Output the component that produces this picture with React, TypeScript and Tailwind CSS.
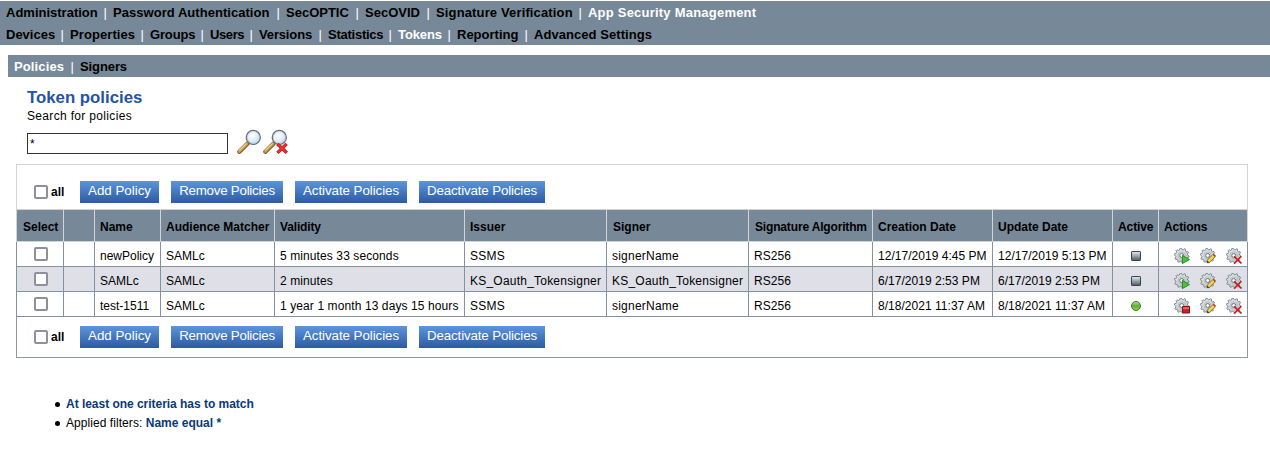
import React from 'react';

type NavItem = { label: string; width: string; tracking?: string; active?: boolean };

const MAIN_NAV: NavItem[] = [
  { label: 'Administration', width: 'w-[107px]' },
  { label: 'Password Authentication', width: 'w-[173px]', tracking: 'tracking-[0.04px]' },
  { label: 'SecOPTIC', width: 'w-[79px]' },
  { label: 'SecOVID', width: 'w-[71px]' },
  { label: 'Signature Verification', width: 'w-[152px]', tracking: 'tracking-[0.14px]' },
  { label: 'App Security Management', width: 'w-[180px]', tracking: 'tracking-[0.22px]', active: true },
];

const SUB_NAV: NavItem[] = [
  { label: 'Devices', width: 'w-[64px]' },
  { label: 'Properties', width: 'w-[80px]', tracking: 'tracking-[0.08px]' },
  { label: 'Groups', width: 'w-[60px]', tracking: 'tracking-[-0.15px]' },
  { label: 'Users', width: 'w-[49px]', tracking: 'tracking-[-0.4px]' },
  { label: 'Versions', width: 'w-[69px]', tracking: 'tracking-[-0.15px]' },
  { label: 'Statistics', width: 'w-[70px]', tracking: 'tracking-[-0.25px]' },
  { label: 'Tokens', width: 'w-[59px]', tracking: 'tracking-[-0.1px]', active: true },
  { label: 'Reporting', width: 'w-[77px]' },
  { label: 'Advanced Settings', width: 'w-[140px]', tracking: 'tracking-[0.06px]' },
];

const TAB_NAV: NavItem[] = [
  { label: 'Policies', width: 'w-[66px]', tracking: 'tracking-[0.12px]', active: true },
  { label: 'Signers', width: 'w-[60px]', tracking: 'tracking-[-0.1px]' },
];

function NavRow({ items }: { items: NavItem[] }) {
  return (
    <nav className="flex h-[22px] items-start pt-px text-[13px] leading-[22px] font-bold whitespace-nowrap">
      {items.map((item, i) => (
        <span key={item.label} className={`flex justify-between ${item.width}`}>
          <a className={`${item.active ? 'text-white' : 'text-black'} ${item.tracking ?? ''}`}>{item.label}</a>
          {i < items.length - 1 && <span className="pr-[6px] font-normal text-white">|</span>}
        </span>
      ))}
    </nav>
  );
}

function Magnifier({ clear }: { clear?: boolean }) {
  return (
    <svg width="26" height="26" viewBox="0 0 26 26">
      <defs>
        <radialGradient id="lens" cx="0.4" cy="0.35" r="0.7">
          <stop offset="0" stopColor="#ffffff" />
          <stop offset="0.6" stopColor="#dcecf8" />
          <stop offset="1" stopColor="#b4d5ef" />
        </radialGradient>
      </defs>
      <path d="M10.6 14.4 2.4 22.7" stroke="#6b4a20" strokeWidth="4.2" strokeLinecap="round" />
      <path d="M10.1 14.6 2.4 22.4" stroke="#c99550" strokeWidth="3" strokeLinecap="round" />
      <path d="M9.6 14.3 2.2 21.6" stroke="#f0d5a0" strokeWidth="1.1" />
      <circle cx="16.3" cy="8.4" r="7" fill="url(#lens)" stroke="#66707a" strokeWidth="1.4" />
      <circle cx="16.3" cy="8.4" r="6" fill="none" stroke="#c3ccd3" strokeWidth="0.8" />
      {clear && (
        <g strokeLinecap="butt">
          <path d="m14.4 14.9 9.4 8.9M23.6 14.9l-9.2 9" stroke="#b01818" strokeWidth="3.4" />
          <path d="m14.8 15.3 8.6 8.1M23.2 15.3l-8.4 8.2" stroke="#e63232" strokeWidth="2.1" />
        </g>
      )}
    </svg>
  );
}

type Badge = 'play' | 'stop' | 'edit' | 'delete';

const TEETH = 10;
const GEAR_POINTS = Array.from({ length: TEETH * 4 }, (_, i) => {
  const radius = i % 4 < 2 ? 7.4 : 5.9;
  const angle = ((i + 0.5) / (TEETH * 4)) * Math.PI * 2;
  return `${(7.7 + radius * Math.cos(angle)).toFixed(2)},${(7.5 + radius * Math.sin(angle)).toFixed(2)}`;
}).join(' ');

function GearIcon({ badge }: { badge: Badge }) {
  return (
    <svg width="16" height="16" viewBox="0 0 16 16">
      <defs>
        <linearGradient id="gear" x1="0" y1="0" x2="1" y2="1">
          <stop offset="0" stopColor="#e9eef1" />
          <stop offset="1" stopColor="#b3bcc2" />
        </linearGradient>
      </defs>
      <polygon points={GEAR_POINTS} fill="url(#gear)" stroke="#6d767c" strokeWidth="0.8" strokeLinejoin="round" />
      <circle cx="7.7" cy="7.5" r="3.7" fill="none" stroke="#b9c2c8" strokeWidth="1" />
      <circle cx="7.7" cy="7.5" r="2" fill="#fafbfc" stroke="#6d767c" strokeWidth="1" />
      {badge === 'play' && <path d="M8.4 7.4v8.2l7.1-4.1z" fill="#4fc23b" stroke="#23851b" strokeWidth="0.9" />}
      {badge === 'stop' && (
        <>
          <path d="M8.5 8.5h7v6.5h-7z" fill="#c91f26" stroke="#8e0c13" />
          <path d="M9 9.2h6v2H9z" fill="#e8696c" />
        </>
      )}
      {badge === 'edit' && (
        <>
          <path d="m8 13.7 6.2-6.2" stroke="#8b6a1a" strokeWidth="3.8" />
          <path d="m6.6 15.3.4-2.8 2.4 2.3z" fill="#4a3a20" />
          <path d="m8.3 13.4 5.5-5.5" stroke="#f8d750" strokeWidth="2.4" />
          <path d="m13.9 7.7 1-1" stroke="#d0312b" strokeWidth="3" />
        </>
      )}
      {badge === 'delete' && <path d="m8 8.3 7.5 7.2M15.3 8.3l-7.2 7.4" stroke="#d01b1b" strokeWidth="1.6" />}
    </svg>
  );
}

function StatusIcon({ active }: { active: boolean }) {
  return (
    <svg width="10" height="10" viewBox="0 0 10 10" className="mx-auto block">
      <defs>
        <linearGradient id="idle" x1="0" y1="0" x2="0" y2="1">
          <stop offset="0" stopColor="#e4edf3" />
          <stop offset="1" stopColor="#4d5a63" />
        </linearGradient>
        <linearGradient id="running" x1="0" y1="0" x2="0" y2="1">
          <stop offset="0" stopColor="#b5dc92" />
          <stop offset="0.5" stopColor="#62b030" />
          <stop offset="1" stopColor="#8ad850" />
        </linearGradient>
      </defs>
      {active ? (
        <circle cx="5" cy="5" r="4.5" fill="url(#running)" stroke="#3c6b20" strokeWidth="0.9" />
      ) : (
        <rect x="0.5" y="0.5" width="9" height="9" rx="0.6" fill="url(#idle)" stroke="#39434a" />
      )}
    </svg>
  );
}

function Checkbox() {
  return (
    <input
      type="checkbox"
      className="block size-[14px] shrink-0 appearance-none rounded-[2px] border-2 border-[#8f8f9d] bg-white"
    />
  );
}

const BUTTONS = [
  { label: 'Add Policy', style: 'w-[79px]' },
  { label: 'Remove Policies', style: 'w-[112px] tracking-[-0.24px]' },
  { label: 'Activate Policies', style: 'w-[112px] tracking-[-0.06px]' },
  { label: 'Deactivate Policies', style: 'w-[126px] tracking-[-0.14px]' },
];

function Toolbar() {
  return (
    <div className="flex items-start pl-[17px]">
      <label className="flex w-[46px] items-center gap-[3px] pt-1 leading-[14px] font-bold">
        <Checkbox />
        all
      </label>
      <div className="flex gap-3">
        {BUTTONS.map((b) => (
          <button
            key={b.label}
            className={`h-[22px] bg-linear-to-b from-[#5c96dc] to-[#2d5aa3] pb-[3px] text-[13.33px] leading-[19px] whitespace-nowrap text-white ${b.style}`}
          >
            {b.label}
          </button>
        ))}
      </div>
    </div>
  );
}

const COLUMNS = [
  { label: 'Select', width: 'w-[48px]', text: 'pl-[6px]' },
  { label: '', width: 'w-[31px]', text: 'pl-[5px]' },
  { label: 'Name', width: 'w-[66px]', text: 'pl-[5px]' },
  { label: 'Audience Matcher', width: 'w-[114px]', text: 'pl-[5px]' },
  { label: 'Validity', width: 'w-[190px]', text: 'pl-[5px] tracking-[-0.15px]' },
  { label: 'Issuer', width: 'w-[142px]', text: 'pl-[5px]' },
  { label: 'Signer', width: 'w-[142px]', text: 'pl-[6px]' },
  { label: 'Signature Algorithm', width: 'w-[124px]', text: 'pl-[6px] tracking-[-0.16px]' },
  { label: 'Creation Date', width: 'w-[120px]', text: 'pl-[5px]' },
  { label: 'Update Date', width: 'w-[120px]', text: 'pl-[5px]' },
  { label: 'Active', width: 'w-[46px]', text: 'pl-[5px] tracking-[-0.1px]' },
  { label: 'Actions', width: 'w-[89px]', text: 'pl-[5px] tracking-[-0.1px]' },
];

const POLICIES = [
  {
    active: false,
    cells: ['newPolicy', 'SAMLc', '5 minutes 33 seconds', 'SSMS', 'signerName', 'RS256', '12/17/2019 4:45 PM', '12/17/2019 5:13 PM'],
  },
  {
    active: false,
    cells: ['SAMLc', 'SAMLc', '2 minutes', 'KS_Oauth_Tokensigner', 'KS_Oauth_Tokensigner', 'RS256', '6/17/2019 2:53 PM', '6/17/2019 2:53 PM'],
  },
  {
    active: true,
    cells: ['test-1511', 'SAMLc', '1 year 1 month 13 days 15 hours', 'SSMS', 'signerName', 'RS256', '8/18/2021 11:37 AM', '8/18/2021 11:37 AM'],
  },
];

const CELL_TRACKING = ['', '', 'tracking-[0.1px]', 'tracking-[0.22px]', 'tracking-[0.22px]', 'tracking-[0.05px]', 'tracking-[0.03px]', 'tracking-[0.03px]'];

const CELL = 'border-r border-b border-[#8492a0] p-0';

export default function App() {
  return (
    <div className="h-[451px] overflow-hidden bg-white pt-px font-['Liberation_Sans',Arial,sans-serif] text-xs text-black">
      <header className="h-11 bg-[#778899] pl-1.5">
        <NavRow items={MAIN_NAV} />
        <NavRow items={SUB_NAV} />
      </header>
      <div className="mt-2.5 ml-2 bg-[#778899] pl-1.5">
        <NavRow items={TAB_NAV} />
      </div>

      <section className="pt-[11px] pl-[27px]">
        <h1 className="text-[16.8px] leading-5 font-bold text-[#2353a4]">Token policies</h1>
        <p className="leading-4 tracking-[0.33px]">Search for policies</p>
        <div className="flex h-10 pt-[5px]">
          <input
            defaultValue="*"
            className="mt-[4px] mr-[9px] h-[21px] w-[201px] border border-[#333] bg-white px-[2px] text-xs outline-none"
          />
          <Magnifier />
          <Magnifier clear />
        </div>
      </section>

      <table className="ml-4 w-[1232px] table-fixed border-separate border-spacing-0 text-left whitespace-nowrap">
        <colgroup>
          {COLUMNS.map((c, i) => (
            <col key={i} className={c.width} />
          ))}
        </colgroup>
        <thead>
          <tr className="h-[46px]">
            <td colSpan={12} className="border border-[#d3d3d3] p-0 pt-4 align-top">
              <Toolbar />
            </td>
          </tr>
          <tr className="h-8 bg-[#778899]">
            {COLUMNS.map((c, i) => (
              <th
                key={i}
                className={`border-r border-b border-[#d3d3d3] p-0 pt-[3px] font-bold first:border-l ${c.text}`}
              >
                {c.label}
              </th>
            ))}
          </tr>
        </thead>
        <tbody>
          {POLICIES.map((p, r) => (
            <tr key={r} className="h-[25px] even:bg-[#dedfe7]">
              <td className={`${CELL} border-l pt-[5px] pl-[17px] align-top`}>
                <Checkbox />
              </td>
              <td className={CELL} />
              {p.cells.map((text, i) => (
                <td key={i} className={`${CELL} pt-[6px] pl-[5px] align-top leading-4 ${CELL_TRACKING[i]}`}>
                  {text}
                </td>
              ))}
              <td className={`${CELL} pt-[9px] align-top`}>
                <StatusIcon active={p.active} />
              </td>
              <td className={`${CELL} pt-[6px] pl-[15px] align-top`}>
                <div className="flex gap-2.5">
                  <GearIcon badge={p.active ? 'stop' : 'play'} />
                  <GearIcon badge="edit" />
                  <GearIcon badge="delete" />
                </div>
              </td>
            </tr>
          ))}
        </tbody>
        <tfoot>
          <tr className="h-[41px]">
            <td colSpan={12} className="border-x border-b border-[#8f979e] p-0 pt-[9px] align-top">
              <Toolbar />
            </td>
          </tr>
        </tfoot>
      </table>

      <ul className="mt-[37px] ml-[55px] leading-[19px]">
        <li className="flex">
          <span className="mt-[7px] mr-[6px] size-[5px] rounded-full bg-black" />
          <b className="tracking-[-0.03px] text-[#083a78]">At least one criteria has to match</b>
        </li>
        <li className="flex">
          <span className="mt-[7px] mr-[6px] size-[5px] rounded-full bg-black" />
          <span className="tracking-[0.06px]">
            Applied filters: <b className="tracking-normal text-[#083a78]">Name equal *</b>
          </span>
        </li>
      </ul>
    </div>
  );
}
